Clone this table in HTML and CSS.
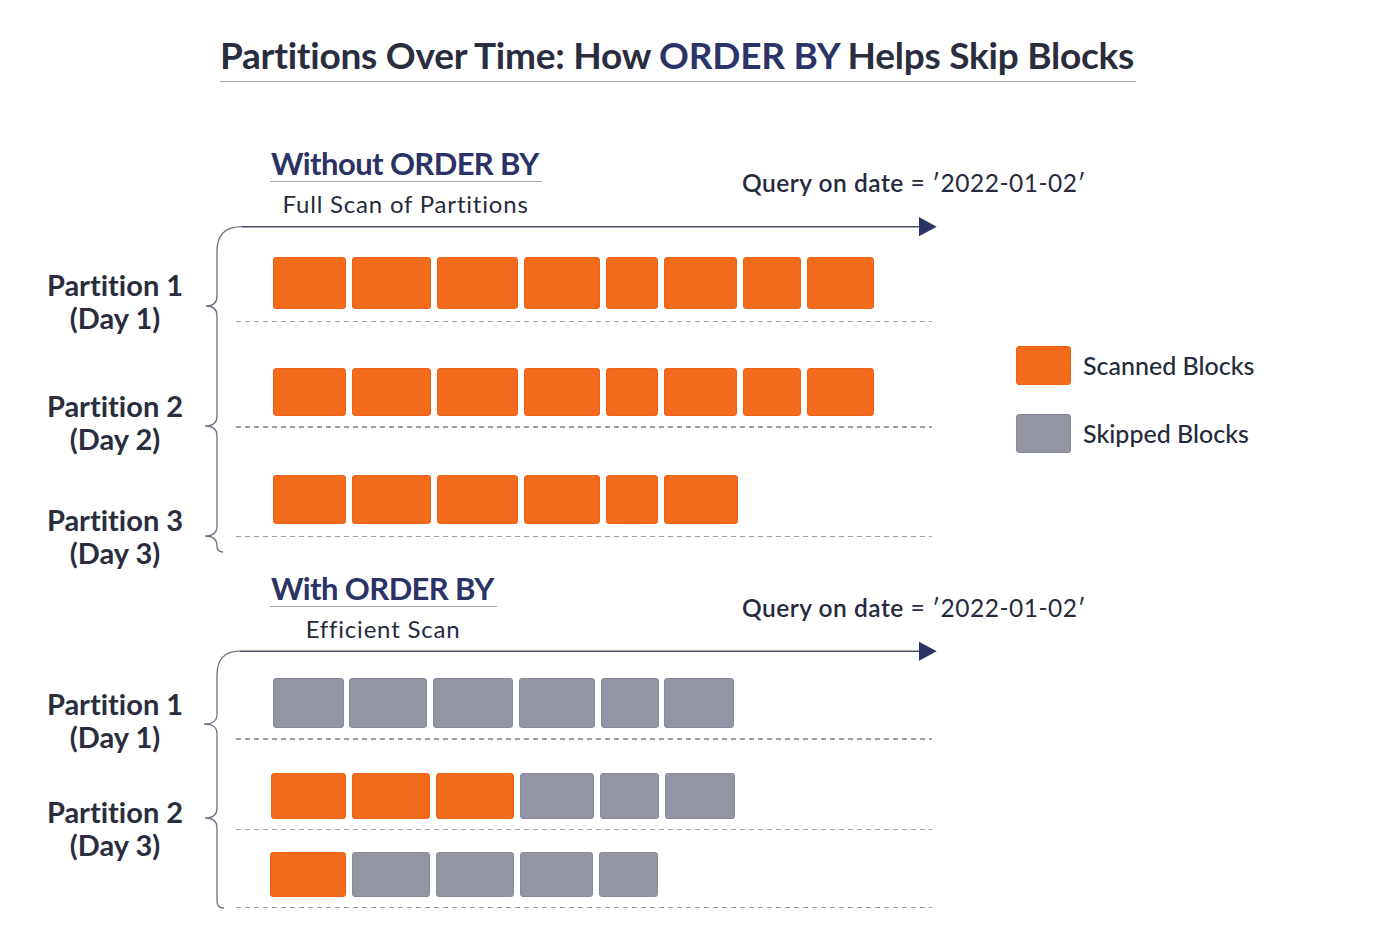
FILE: index.html
```html
<!DOCTYPE html>
<html lang="en">
<head>
<meta charset="utf-8">
<title>Partitions Over Time: How ORDER BY Helps Skip Blocks</title>
<link rel="stylesheet" href="styles.css">
</head>
<body>
<main class="page">
  <header class="title-bar">
    <h1 class="title">Partitions Over Time: How <span class="accent">ORDER BY</span> Helps Skip Blocks</h1>
  </header>

  <section class="scan scan-full">
    <div class="head">
      <div class="head-main">
        <div class="titles">
          <h2 class="scan-title">Without ORDER BY</h2>
          <p class="scan-sub">Full Scan of Partitions</p>
        </div>
      </div>
      <p class="query"><span class="q-key">Query on date</span> = ′2022-01-02′</p>
    </div>

    <div class="chart">
      <svg class="bracket" width="940" height="340" viewBox="0 0 940 340" aria-hidden="true">
        <path class="brace" d="M223 333 Q217 333 217 327 C217 319 212 317 205 317 C212 317 217 315 217 307 L217 217 C217 209 212 207 205 207 C212 207 217 205 217 197 L217 97 C217 89 212 87 206 87 C212 87 217 85 217 77 L217 32 Q217 7.7 242 7.7"/>
        <path class="axis" d="M242 7.7 L921 7.7"/>
        <polygon class="head-tip" points="919,-2 936.7,7.7 919,17.2"/>
      </svg>

      <div class="label l1a">Partition 1<br>(Day 1)</div>
      <div class="row r1a">
        <div class="blocks b-start-1">
          <span class="blk scan-blk" style="width:73px"></span>
          <span class="blk scan-blk" style="width:79px"></span>
          <span class="blk scan-blk" style="width:81px"></span>
          <span class="blk scan-blk" style="width:76px"></span>
          <span class="blk scan-blk" style="width:52px"></span>
          <span class="blk scan-blk" style="width:73px"></span>
          <span class="blk scan-blk" style="width:58px"></span>
          <span class="blk scan-blk" style="width:67px"></span>
        </div>
        <div class="dash"></div>
      </div>

      <div class="label l1b">Partition 2<br>(Day 2)</div>
      <div class="row r1b">
        <div class="blocks b-start-1">
          <span class="blk scan-blk" style="width:73px"></span>
          <span class="blk scan-blk" style="width:79px"></span>
          <span class="blk scan-blk" style="width:81px"></span>
          <span class="blk scan-blk" style="width:76px"></span>
          <span class="blk scan-blk" style="width:52px"></span>
          <span class="blk scan-blk" style="width:73px"></span>
          <span class="blk scan-blk" style="width:58px"></span>
          <span class="blk scan-blk" style="width:67px"></span>
        </div>
        <div class="dash"></div>
      </div>

      <div class="label l1c">Partition 3<br>(Day 3)</div>
      <div class="row r1c">
        <div class="blocks b-start-1">
          <span class="blk scan-blk" style="width:73px"></span>
          <span class="blk scan-blk" style="width:79px"></span>
          <span class="blk scan-blk" style="width:81px"></span>
          <span class="blk scan-blk" style="width:76px"></span>
          <span class="blk scan-blk" style="width:52px"></span>
          <span class="blk scan-blk" style="width:74px"></span>
        </div>
        <div class="dash"></div>
      </div>

      <ul class="legend">
        <li class="legend-item"><span class="swatch scan-blk"></span>Scanned Blocks</li>
        <li class="legend-item"><span class="swatch skip-blk"></span>Skipped Blocks</li>
      </ul>
    </div>
  </section>

  <section class="scan scan-ordered">
    <div class="head">
      <div class="head-main">
        <div class="titles">
          <h2 class="scan-title">With ORDER BY</h2>
          <p class="scan-sub">Efficient Scan</p>
        </div>
      </div>
      <p class="query"><span class="q-key">Query on date</span> = ′2022-01-02′</p>
    </div>

    <div class="chart">
      <svg class="bracket" width="940" height="270" viewBox="0 0 940 270" aria-hidden="true">
        <path class="brace" d="M224 264 Q217 264 217 257 L217 184 C217 176 212 174 205 174 C212 174 217 172 217 164 L217 90 C217 82 212 80 204 80 C212 80 217 78 217 70 L217 31 Q217 7.2 240 7.2"/>
        <path class="axis" d="M240 7.2 L921 7.2"/>
        <polygon class="head-tip" points="919,-2.3 936.7,7.2 919,16.7"/>
      </svg>

      <div class="label l2a">Partition 1<br>(Day 1)</div>
      <div class="row r2a">
        <div class="blocks b-start-2a">
          <span class="blk skip-blk" style="width:71px"></span>
          <span class="blk skip-blk" style="width:78px"></span>
          <span class="blk skip-blk" style="width:80.5px"></span>
          <span class="blk skip-blk" style="width:76.5px"></span>
          <span class="blk skip-blk" style="width:58px"></span>
          <span class="blk skip-blk" style="width:70px"></span>
        </div>
        <div class="dash"></div>
      </div>

      <div class="label l2b">Partition 2<br>(Day 3)</div>
      <div class="row r2b">
        <div class="blocks b-start-2b">
          <span class="blk scan-blk" style="width:75px"></span>
          <span class="blk scan-blk" style="width:78px"></span>
          <span class="blk scan-blk" style="width:78px"></span>
          <span class="blk skip-blk" style="width:74px"></span>
          <span class="blk skip-blk" style="width:59px"></span>
          <span class="blk skip-blk" style="width:70px"></span>
        </div>
        <div class="dash"></div>
      </div>

      <div class="row r2c">
        <div class="blocks b-start-2c">
          <span class="blk scan-blk" style="width:75.5px"></span>
          <span class="blk skip-blk" style="width:78px"></span>
          <span class="blk skip-blk" style="width:78px"></span>
          <span class="blk skip-blk" style="width:73px"></span>
          <span class="blk skip-blk" style="width:59.5px"></span>
        </div>
        <div class="dash"></div>
      </div>
    </div>
  </section>
</main>
</body>
</html>
```
FILE: styles.css
```css
* { box-sizing: border-box; }

html, body {
  margin: 0;
  padding: 0;
  background: #ffffff;
}

body {
  font-family: "Lato", "Noto Sans", "Liberation Sans", sans-serif;
  color: #262a3d;
  font-variant-ligatures: none;
}

.page {
  width: 1400px;
  height: 933px;
  overflow: hidden;
}

/* ---------- title ---------- */
.title-bar {
  padding: 35.5px 0 0 220px;
}

.title {
  display: inline-block;
  margin: 0;
  font-size: 37px;
  line-height: 37px;
  font-weight: 700;
  letter-spacing: -0.25px;
  color: #2a2d3e;
  padding: 0 2px 8.5px 0;
  border-bottom: 1.5px solid #a3a5b3;
  white-space: nowrap;
}

.accent { color: #2b3468; }

/* ---------- section heads ---------- */
.scan-full { margin-top: 64.6px; }
.scan-ordered { margin-top: 34.6px; }

.head {
  display: flex;
  align-items: flex-start;
  padding-left: 269.5px;
}

.head-main { width: 472.5px; }

.titles {
  display: inline-flex;
  flex-direction: column;
  align-items: center;
}

.scan-title {
  margin: 0;
  font-size: 31px;
  line-height: 33px;
  font-weight: 700;
  letter-spacing: -0.6px;
  color: #2b3266;
  padding: 0 3px 1.5px 1.5px;
  border-bottom: 1.5px solid #a3a5b3;
  white-space: nowrap;
}

.scan-sub {
  margin: 9.6px 0 0;
  font-size: 24px;
  line-height: 23px;
  font-weight: 400;
  letter-spacing: 0.8px;
  color: #262a3d;
  white-space: nowrap;
}

.query {
  margin: 23px 0 0;
  font-size: 24.5px;
  line-height: 25px;
  font-weight: 400;
  letter-spacing: 0.5px;
  color: #262a3d;
  white-space: nowrap;
}

.q-key { font-weight: 600; }

/* ---------- chart ---------- */
.chart {
  position: relative;
  margin-top: 4px;
  display: grid;
  grid-template-columns: 236px 696px 1fr;
  align-items: start;
}

.bracket {
  position: absolute;
  left: 0;
  top: 0;
  overflow: visible;
  pointer-events: none;
}

.brace {
  fill: none;
  stroke: #6c6f82;
  stroke-width: 1.3;
}

.axis {
  fill: none;
  stroke: #4b4f6a;
  stroke-width: 1.6;
}

.head-tip { fill: #2b3264; }

.label {
  grid-column: 1;
  padding-right: 6px;
  text-align: center;
  font-size: 29px;
  line-height: 33px;
  font-weight: 700;
  color: #2a2d3e;
  margin-bottom: -120px;
  white-space: nowrap;
}

.row { grid-column: 2; }

.blocks {
  display: flex;
  gap: 6px;
}

.b-start-1 { margin-left: 37px; }
.b-start-2a { margin-left: 36.5px; gap: 5.5px; }
.b-start-2b { margin-left: 34.5px; }
.b-start-2c { margin-left: 34px; }

.blk {
  display: block;
  border-radius: 3px;
}

.scan-blk {
  background: #f26a1c;
  border: 1px solid #ee6216;
}

.skip-blk {
  background: #9395a2;
  border: 1px solid #878998;
}

.dash {
  height: 1.5px;
  background-image: repeating-linear-gradient(to right, #9c9eac 0 5px, transparent 5px 9px);
}

/* section 1 rows */
.l1a { grid-row: 1; margin-top: 49.3px; }
.l1b { grid-row: 2; margin-top: 67.1px; }
.l1c { grid-row: 3; margin-top: 75px; }

.r1a { grid-row: 1; padding-top: 38px; }
.r1a .blk { height: 52px; }
.r1a .dash { margin-top: 12px; }

.r1b { grid-row: 2; padding-top: 45.5px; }
.r1b .blk { height: 48px; }
.r1b .dash { margin-top: 10.5px; }

.r1c { grid-row: 3; padding-top: 47px; }
.r1c .blk { height: 49px; }
.r1c .dash { margin-top: 12px; }

/* section 2 rows */
.l2a { grid-row: 1; margin-top: 42.8px; }
.l2b { grid-row: 2; margin-top: 54.8px; }

.r2a { grid-row: 1; padding-top: 33.8px; }
.r2a .blk { height: 50px; }
.r2a .dash { margin-top: 10.7px; }

.r2b { grid-row: 2; padding-top: 33px; }
.r2b .blk { height: 46.5px; }
.r2b .dash { margin-top: 9.3px; }

.r2c { grid-row: 3; padding-top: 21.5px; }
.r2c .blk { height: 45px; }
.r2c .dash { margin-top: 10px; }

/* ---------- legend ---------- */
.legend {
  grid-column: 3;
  grid-row: 1 / 4;
  list-style: none;
  margin: 127px 0 0;
  padding: 0 0 0 84px;
  display: flex;
  flex-direction: column;
  gap: 29px;
}

.legend-item {
  display: flex;
  align-items: center;
  gap: 12px;
  font-size: 25px;
  line-height: 39px;
  font-weight: 500;
  color: #262a3d;
  white-space: nowrap;
}

.swatch {
  display: block;
  width: 55px;
  height: 39px;
  border-radius: 3px;
}
```
